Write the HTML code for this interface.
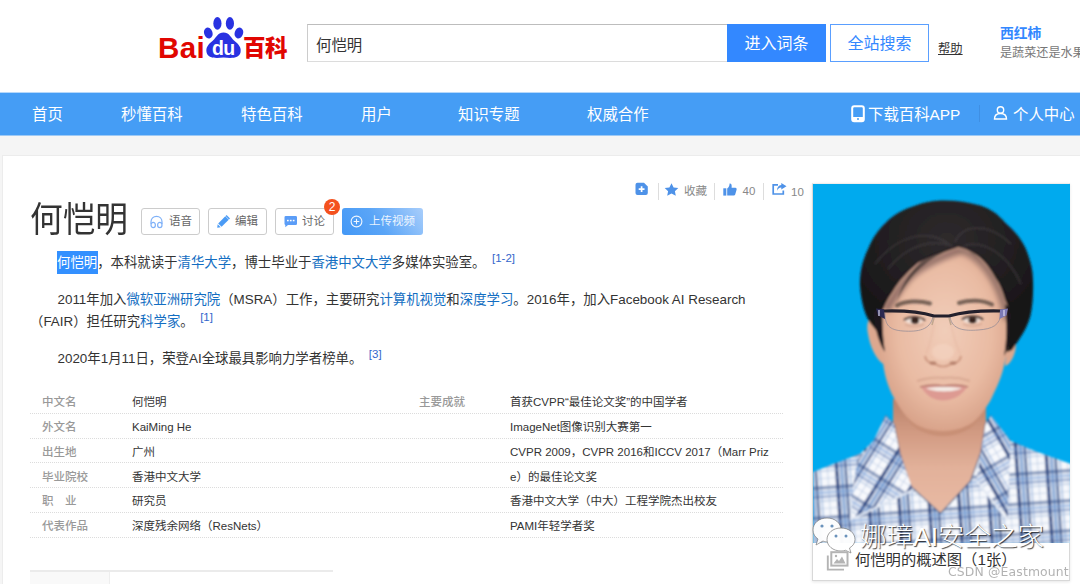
<!DOCTYPE html>
<html lang="zh-CN">
<head>
<meta charset="utf-8">
<title>何恺明_百度百科</title>
<style>
*{box-sizing:border-box;margin:0;padding:0}
html,body{width:1080px;height:584px;overflow:hidden;background:#f5f5f5}
body{position:relative;font-family:"Liberation Sans","Noto Sans CJK SC",sans-serif;font-size:14px;color:#333}
.abs{position:absolute;white-space:nowrap}
a{color:#136ec2;text-decoration:none}
#hdr{position:absolute;left:0;top:0;width:1080px;height:92px;background:#fff}
#nav{position:absolute;left:0;top:92px;width:1080px;height:44px;background:linear-gradient(to bottom,#b5d8fb 0,#b5d8fb 1px,#459df5 1px,#459df5 43px,#9dc9f5 43px)}
#nav span{position:absolute;top:1px;line-height:44px;color:#fff;font-size:15.4px;white-space:nowrap}
#card{position:absolute;left:2px;top:155px;width:1090px;height:440px;background:#fff;border:1px solid #ececec}
.p{position:absolute;white-space:nowrap;font-size:13.4px;line-height:24px;color:#333}
.sup{font-size:11.5px;position:relative;top:-5px;color:#3366cc;margin-left:6.500px}
.btn{position:absolute;top:208px;height:27px;border:1px solid #ccc;border-radius:3px;background:#fff;font-size:11.5px;line-height:25px;color:#666;white-space:nowrap}
.row{position:absolute;left:30px;width:753px;height:0;border-top:1px dotted #dcdcdc}
.k{position:absolute;left:42px;font-size:11.5px;color:#999;font-weight:500;white-space:nowrap;line-height:24px}
.v{position:absolute;font-size:11.5px;color:#333;white-space:nowrap;line-height:24px}
</style>
</head>
<body>
<div id="hdr">
  <!-- logo -->
  <div class="abs" id="bai" style="left:158px;top:31px;font:bold 29.5px/34px 'Liberation Sans',sans-serif;color:#e10601;letter-spacing:0.4px">Bai</div>
  <svg class="abs" id="paw" style="left:203px;top:16px" width="41" height="44" viewBox="0 0 41 44">
    <g fill="#2932e1">
      <ellipse cx="14.400" cy="7.400" rx="4.100" ry="6.300"/>
      <ellipse cx="26.900" cy="7.400" rx="4.100" ry="6.300"/>
      <ellipse cx="5.300" cy="17" rx="4.200" ry="5.600" transform="rotate(-18 5.300 17)"/>
      <ellipse cx="35.900" cy="17" rx="4.200" ry="5.600" transform="rotate(18 35.900 17)"/>
      <path d="M20.600 16.500 C26 16.500 27.500 21 31 24.500 C36 28.500 38.500 31.500 37.500 36.500 C36 42 30 42.500 20.600 41.500 C11 42.500 5 42 3.600 36.500 C2.600 31.500 5 28.500 10 24.500 C13.500 21 15 16.500 20.600 16.500Z"/>
    </g>
    <text x="20.200" y="38.600" text-anchor="middle" font-family="Liberation Sans, sans-serif" font-weight="bold" font-size="19.500" fill="#fff" letter-spacing="-0.8">du</text>
  </svg>
  <div class="abs" id="bk" style="left:243px;top:31px;font:900 22.5px/30px 'Noto Sans CJK SC',sans-serif;color:#e10601;letter-spacing:-0.6px">百科</div>
  <!-- search -->
  <div class="abs" style="left:307px;top:24px;width:421px;height:38px;border:1px solid #ccc;border-top-color:#bdbdbd;border-bottom-color:#dcdcdc;background:#fff"></div>
  <div class="abs" style="left:316px;top:35px;font-size:15.400px;line-height:22px;color:#333">何恺明</div>
  <div class="abs" style="left:727px;top:24px;width:99px;height:38px;background:#3388ff;color:#fff;font-size:16px;line-height:40px;text-align:center">进入词条</div>
  <div class="abs" style="left:830px;top:24px;width:99px;height:38px;border:1px solid #5a9fff;background:#fff;color:#3388ff;font-size:16px;line-height:38px;text-align:center">全站搜索</div>
  <div class="abs" style="left:938px;top:41px;font-size:12.3px;line-height:16px;color:#333;text-decoration:underline">帮助</div>
  <div class="abs" style="left:1000px;top:25px;font-size:13.8px;font-weight:bold;line-height:18px;color:#3388ff">西红柿</div>
  <div class="abs" style="left:1000px;top:45px;font-size:12.1px;line-height:16px;color:#777">是蔬菜还是水果</div>
</div>
<div id="nav">
  <span style="left:32px">首页</span>
  <span style="left:121px">秒懂百科</span>
  <span style="left:241px">特色百科</span>
  <span style="left:361px">用户</span>
  <span style="left:458px">知识专题</span>
  <span style="left:587px">权威合作</span>
  <svg class="abs" style="left:851px;top:13px" width="14" height="18" viewBox="0 0 14 18"><rect x="1.2" y="1.2" width="11.6" height="15" rx="2" fill="none" stroke="#fff" stroke-width="2"/><rect x="1.2" y="12" width="11.6" height="4" fill="#fff"/><circle cx="7" cy="14" r="1" fill="#459df5"/></svg>
  <span style="left:868px">下载百科APP</span>
  <div class="abs" style="left:979px;top:13px;width:1px;height:17px;background:#3f8fe3"></div>
  <svg class="abs" style="left:993px;top:13px" width="15" height="16" viewBox="0 0 15 16"><circle cx="7.5" cy="5" r="3.2" fill="none" stroke="#fff" stroke-width="1.4"/><path d="M1.5 14 C1.5 10 4 8.5 7.5 8.5 C11 8.5 13.5 10 13.5 14Z" fill="none" stroke="#fff" stroke-width="1.4"/></svg>
  <span style="left:1013px">个人中心</span>
</div>
<div id="card"></div>

<!-- title -->
<div class="abs" id="title" style="left:30px;top:194.400px;font-size:32.700px;line-height:48px;color:#333;transform:scaleY(1.09);transform-origin:0 0">何恺明</div>
<div class="btn" style="left:141px;width:59px">
  <svg style="position:absolute;left:7px;top:5.500px" width="15" height="14" viewBox="0 0 15 14"><g fill="none" stroke="#7fb1f8" stroke-width="1.200"><path d="M2 9 V6.800 C2 3.600 4.300 1.300 7.500 1.300 C10.700 1.300 13 3.600 13 6.800 V9"/><ellipse cx="4.200" cy="10" rx="2.200" ry="2.700"/><ellipse cx="10.800" cy="10" rx="2.200" ry="2.700"/></g></svg>
  <span style="position:absolute;left:27px">语音</span></div>
<div class="btn" style="left:208px;width:59px">
  <svg style="position:absolute;left:7.500px;top:5.500px" width="13" height="13" viewBox="0 0 13 13"><g fill="#4a9bf5"><path d="M8.300 1.300 L11.700 4.700 L4.600 11.800 L1.200 8.400Z"/><path d="M9.100 .500 L10.100 -.500 L13.500 2.900 L12.500 3.900Z" transform="translate(-.5 .5)"/><path d="M.700 9.300 L3.700 12.300 L.2 12.800Z"/></g></svg>
  <span style="position:absolute;left:26px">编辑</span></div>
<div class="btn" style="left:275px;width:59px">
  <svg style="position:absolute;left:7.500px;top:7px" width="14" height="12" viewBox="0 0 14 12"><path d="M1.800 0 H11.700 Q13 0 13 1.300 V7.700 Q13 9 11.700 9 H4 L1.300 11.300 V9 Q.500 8.800 .500 7.700 V1.300 Q.500 0 1.800 0Z" fill="#5b9df7"/><g fill="#fff"><rect x="3" y="3.800" width="1.700" height="1.500"/><rect x="5.900" y="3.800" width="1.700" height="1.500"/><rect x="8.800" y="3.800" width="1.700" height="1.500"/></g></svg>
  <span style="position:absolute;left:26px">讨论</span></div>
<div class="btn" style="left:342px;width:81px;background:linear-gradient(55deg,#4398f6 0%,#5aa5f7 45%,#a9cefb 100%);border:0;color:rgba(255,255,255,.88);line-height:27px">
  <svg style="position:absolute;left:7.500px;top:6.500px" width="13" height="13" viewBox="0 0 13 13"><g fill="none" stroke="#fff" stroke-width="1.100" opacity=".92"><circle cx="6.500" cy="6.500" r="5.400"/><path d="M6.500 3.700 V9.300 M3.700 6.500 H9.300"/></g></svg>
  <span style="position:absolute;left:27px">上传视频</span></div>
<div class="abs" style="left:324px;top:199px;width:16px;height:16px;border-radius:8px;background:#f4511e;color:#fff;font-size:12px;line-height:16px;text-align:center">2</div>

<!-- top-right tools -->
<svg class="abs" style="left:635px;top:182px" width="14" height="14" viewBox="0 0 14 14"><path d="M2.500 .800 H9 L12.800 4.600 V11 Q12.800 13 10.800 13 H2.500 Q.500 13 .500 11 V2.800 Q.500 .800 2.500 .800Z" fill="#4e92e8"/><path d="M6.600 4.200 V10 M3.700 7.100 H9.500" stroke="#fff" stroke-width="1.700" fill="none"/></svg>
<div class="abs" style="left:658px;top:183px;width:1px;height:17px;background:#ddd"></div>
<svg class="abs" style="left:664px;top:183px" width="15" height="13" viewBox="0 0 15 13"><path d="M7.500 .300 L9.600 4.500 L14.300 5.100 L10.900 8.300 L11.800 12.800 L7.500 10.600 L3.200 12.800 L4.100 8.300 L.700 5.100 L5.400 4.500Z" fill="#4e92e8"/></svg>
<div class="abs" style="left:684px;top:183px;font-size:11.500px;line-height:16px;color:#888">收藏</div>
<div class="abs" style="left:714px;top:183px;width:1px;height:17px;background:#ddd"></div>
<svg class="abs" style="left:723px;top:182.500px" width="14" height="13" viewBox="0 0 14 13"><g fill="#4e92e8"><rect x=".300" y="5.300" width="3" height="7.300"/><path d="M4.200 12.600 V5.500 C6 4.500 6.500 2.500 6.600 .600 C8.300 .400 9 2 8.600 4.800 H12.300 C13.600 4.800 13.900 6 13.500 7 L12.200 11.600 C12 12.300 11.500 12.600 10.800 12.600Z"/></g></svg>
<div class="abs" style="left:742.500px;top:183px;font-size:11.500px;line-height:16px;color:#888">40</div>
<div class="abs" style="left:763px;top:183px;width:1px;height:17px;background:#ddd"></div>
<svg class="abs" style="left:771.500px;top:183px" width="15" height="12" viewBox="0 0 15 12"><path d="M6 1.800 H1.200 V11 H11.300 V7.500" fill="none" stroke="#4e92e8" stroke-width="1.700"/><path d="M9.300 0 L14.500 3.300 L9.300 6.600 V4.500 C7 4.500 5.800 5.800 5 7.800 C5 4.500 6.500 2.200 9.300 2Z" fill="#4e92e8"/></svg>
<div class="abs" style="left:791px;top:183.500px;font-size:11.500px;line-height:16px;color:#888">10</div>

<!-- paragraphs -->
<div class="abs" style="left:57px;top:251px;width:40.500px;height:22.500px;background:#3390ff"></div>
<div class="p" style="left:57px;top:251px"><span style="color:#fff">何恺明</span>，本科就读于<a>清华大学</a>，博士毕业于<a>香港中文大学</a>多媒体实验室。<span class="sup">[1-2]</span></div>
<div class="p" style="left:57.500px;top:288px">2011年加入<a>微软亚洲研究院</a>（MSRA）工作，主要研究<a>计算机视觉</a>和<a>深度学习</a>。2016年，加入Facebook AI Research</div>
<div class="p" style="left:30px;top:310px">（FAIR）担任研究<a>科学家</a>。<span class="sup">[1]</span></div>
<div class="p" style="left:57.500px;top:347px">2020年1月11日，荣登AI全球最具影响力学者榜单。<span class="sup">[3]</span></div>

<!-- table -->
<div class="row" style="top:413px"></div>
<div class="row" style="top:438px"></div>
<div class="row" style="top:462px"></div>
<div class="row" style="top:487px"></div>
<div class="row" style="top:512px"></div>
<div class="row" style="top:537px"></div>
<div class="k" style="top:390px">中文名</div><div class="v" style="left:132px;top:390px">何恺明</div>
<div class="k" style="top:415px">外文名</div><div class="v" style="left:132px;top:415px">KaiMing He</div>
<div class="k" style="top:440px">出生地</div><div class="v" style="left:132px;top:440px">广州</div>
<div class="k" style="top:465px">毕业院校</div><div class="v" style="left:132px;top:465px">香港中文大学</div>
<div class="k" style="top:489px">职&#12288;业</div><div class="v" style="left:132px;top:489px">研究员</div>
<div class="k" style="top:514px">代表作品</div><div class="v" style="left:132px;top:514px">深度残余网络（ResNets）</div>
<div class="k" style="left:419px;top:390px">主要成就</div>
<div class="v" style="left:510px;top:390px">首获CVPR“最佳论文奖”的中国学者</div>
<div class="v" style="left:510px;top:415px">ImageNet图像识别大赛第一</div>
<div class="v" style="left:510px;top:440px">CVPR 2009，CVPR 2016和ICCV 2017（Marr Priz</div>
<div class="v" style="left:510px;top:465px">e）的最佳论文奖</div>
<div class="v" style="left:510px;top:489px">香港中文大学（中大）工程学院杰出校友</div>
<div class="v" style="left:510px;top:514px">PAMI年轻学者奖</div>

<!-- bottom tab stub -->
<div class="abs" style="left:30px;top:569.500px;width:303px;height:2px;background:#ebebeb"></div>
<div class="abs" style="left:30px;top:572px;width:80px;height:12px;background:#f9f9f9;border-right:1px solid #eee"></div>

<!-- photo -->
<div class="abs" id="frame" style="left:812px;top:183px;width:258px;height:398px;background:#fff;border:1px solid #d8d8d8;border-top-color:#eee;box-shadow:0 1px 3px rgba(0,0,0,.10)"></div>
<svg class="abs" id="photo" style="left:812.500px;top:183.500px" width="257" height="359" viewBox="0 0 257 359">
  <defs>
    <pattern id="plaid" width="30" height="30" patternUnits="userSpaceOnUse" patternTransform="rotate(-4)">
      <rect width="30" height="30" fill="#f6f8fc"/>
      <rect x="2" width="3.500" height="30" fill="#243f7a" opacity=".88"/>
      <rect x="7" width="3.200" height="30" fill="#4f7fc4" opacity=".65"/>
      <rect x="11.500" width="2.600" height="30" fill="#2b4a86" opacity=".8"/>
      <rect x="16" width="2" height="30" fill="#86a8d8" opacity=".5"/>
      <rect x="24" width="1" height="30" fill="#9fb6d8" opacity=".5"/>
      <rect y="2" width="30" height="3.500" fill="#2b4a86" opacity=".5"/>
      <rect y="7" width="30" height="3.200" fill="#6f98d2" opacity=".5"/>
      <rect y="11.500" width="30" height="2.600" fill="#3e62a4" opacity=".45"/>
      <rect y="16" width="30" height="2" fill="#9fb6d8" opacity=".45"/>
      <rect y="24" width="30" height="1" fill="#9fb6d8" opacity=".45"/>
    </pattern>
    <pattern id="plaidL" width="30" height="30" patternUnits="userSpaceOnUse" patternTransform="rotate(32)">
      <rect width="30" height="30" fill="#f8f9fd"/>
      <rect x="2" width="3.500" height="30" fill="#243f7a" opacity=".88"/>
      <rect x="7" width="3.200" height="30" fill="#4f7fc4" opacity=".65"/>
      <rect x="11.500" width="2.600" height="30" fill="#2b4a86" opacity=".8"/>
      <rect x="16" width="2" height="30" fill="#86a8d8" opacity=".5"/>
      <rect x="24" width="1" height="30" fill="#9fb6d8" opacity=".5"/>
      <rect y="2" width="30" height="3.500" fill="#2b4a86" opacity=".5"/>
      <rect y="7" width="30" height="3.200" fill="#6f98d2" opacity=".5"/>
      <rect y="11.500" width="30" height="2.600" fill="#3e62a4" opacity=".45"/>
      <rect y="16" width="30" height="2" fill="#9fb6d8" opacity=".45"/>
      <rect y="24" width="30" height="1" fill="#9fb6d8" opacity=".45"/>
    </pattern>
    <pattern id="plaidR" width="30" height="30" patternUnits="userSpaceOnUse" patternTransform="rotate(-30)">
      <rect width="30" height="30" fill="#f8f9fd"/>
      <rect x="2" width="3.500" height="30" fill="#243f7a" opacity=".88"/>
      <rect x="7" width="3.200" height="30" fill="#4f7fc4" opacity=".65"/>
      <rect x="11.500" width="2.600" height="30" fill="#2b4a86" opacity=".8"/>
      <rect x="16" width="2" height="30" fill="#86a8d8" opacity=".5"/>
      <rect x="24" width="1" height="30" fill="#9fb6d8" opacity=".5"/>
      <rect y="2" width="30" height="3.500" fill="#2b4a86" opacity=".5"/>
      <rect y="7" width="30" height="3.200" fill="#6f98d2" opacity=".5"/>
      <rect y="11.500" width="30" height="2.600" fill="#3e62a4" opacity=".45"/>
      <rect y="16" width="30" height="2" fill="#9fb6d8" opacity=".45"/>
      <rect y="24" width="30" height="1" fill="#9fb6d8" opacity=".45"/>
    </pattern>
    <radialGradient id="skin" cx="50%" cy="45%" r="60%">
      <stop offset="0" stop-color="#f1cdb9"/>
      <stop offset=".6" stop-color="#e9bba3"/>
      <stop offset="1" stop-color="#d49c83"/>
    </radialGradient>
    <linearGradient id="neckg" x1="0" y1="0" x2="0" y2="1">
      <stop offset="0" stop-color="#b9826a"/>
      <stop offset=".3" stop-color="#d29b83"/>
      <stop offset=".6" stop-color="#e2b19a"/>
      <stop offset="1" stop-color="#e8baa4"/>
    </linearGradient>
    <radialGradient id="hairg" cx="50%" cy="25%" r="65%">
      <stop offset="0" stop-color="#2e2a2c"/>
      <stop offset=".55" stop-color="#221f21"/>
      <stop offset="1" stop-color="#161416"/>
    </radialGradient>
    <filter id="blur1"><feGaussianBlur stdDeviation="0.8"/></filter>
    <filter id="blur2"><feGaussianBlur stdDeviation="2"/></filter>
  </defs>
  <rect width="258" height="360" fill="#00aaee"/>
  <g filter="url(#blur1)">
  <!-- neck -->
  <path d="M80 215 L80 262 L97 302 L127.5 330 L158 297 L173 262 L173 215Z" fill="url(#neckg)"/>
  <!-- shirt -->
  <path d="M0 288 L20 280 L47.5 269.5 L62.5 254.5 L72.5 231.5 L81 240 L87 270 L97.5 302 L127.5 329.5 L157.5 297 L168 268 L172.5 240 L178 231.5 L192 254.5 L222 267 L258 280 L258 360 L0 360Z" fill="url(#plaid)"/>
  <path d="M72.5 231.5 L81 240 L87 270 L97.5 302 L127.5 329.5 L157.5 297 L168 268 L172.5 240 L178 231.5" fill="none" stroke="#2a3f68" stroke-width="1.5" opacity=".5"/>
  <!-- collars -->
  <path d="M72.500 231.500 L59 260 L44.500 276 L38 316 L38 335.500 L100 306 L87 270 L81 240Z" fill="url(#plaidL)"/>
  <path d="M38 316 L38 335.500 L100 306" fill="none" stroke="#dfe6f2" stroke-width="2"/>
  <path d="M178 231.500 L197.500 256.500 L196 300 L194.500 336.500 L163.500 296.500 L168 268 L172.500 240Z" fill="url(#plaidR)"/>
  <path d="M194.500 336.500 L163.500 296.500" fill="none" stroke="#e3e9f3" stroke-width="2"/>
  <!-- ears -->
  <path d="M62 134 C55 132 53 140 55 150 C57 162 62 174 70 180 L72 150Z" fill="#dca88f"/>
  <path d="M194 150 L192 182 C198 180 203 170 203 160 C203 152 199 148 194 150Z" fill="#dca88f"/>
  <!-- hair back -->
  <path d="M127.500 16.500 C140 16 155 18 167.500 21.500 C178 25 186 31 192.500 39 C202 47 208 55 212.500 64 C217 75 220 85 220 96.500 C220.500 110 219.500 122 217.500 131.500 C214 145 207 154 199 166 L190 170 L66 150 L58 140 C52 132 48 118 47 101.500 C46.500 88 50 75 55.500 64 C60 53 66 45 72.500 39 C81 30 91 25 102.500 21.500 C110 18.500 119 17 127.500 16.500Z" fill="url(#hairg)"/>
  <g fill="none" stroke="#4a4548" stroke-width="2" opacity=".45"><path d="M140 62 C120 55 95 60 75 85"/><path d="M142 58 C150 40 175 38 198 60"/><path d="M136 60 C115 45 85 50 62 80"/><path d="M150 62 C170 55 195 70 208 100"/></g>
  <!-- face -->
  <path d="M145 63 C130 68 115 73 105 79 C94 88 86 97 80 107 C74 115 70 124 67 134 C66 150 67 165 70 179 C72 195 77 208 82.500 216.500 C90 229 96 236 102.500 241.500 C112 247 122 249 130 249 C142 248 152 244 160 239 C168 231 173 224 177.500 216.500 C184 203 189 192 191 181.500 C195 165 197 150 197 136.500 C196 128 195 122 192.500 116.500 C190 108 187 100 182.500 94 C178 86 174 80 167.500 74 C160 68 152 64 145 63Z" fill="url(#skin)"/>
  <!-- fringe shadow -->
  <g fill="none" stroke="#2a2024" filter="url(#blur2)">
    <path d="M147 66 C127 73 108 82 96 93 C88 102 80 114 73 126" stroke-width="8" opacity=".42"/>
    <path d="M147 66 C160 70 171 80 180 95 C187 107 192 121 194 136" stroke-width="7" opacity=".38"/>
  </g>
  <!-- sideburns -->
  <path d="M60 128 L70 122 C69 140 70 155 72 168 C66 160 62 145 60 128Z" fill="#1b191b"/>
  <path d="M197 125 L192 120 C194 140 194 155 191 172 C196 164 199 150 197 125Z" fill="#1b191b"/>
  <!-- fringe strands -->
  <path d="M145 63 C120 70 95 90 84 118 C88 100 100 82 118 70Z" fill="#1b191b" opacity=".55"/>
  <path d="M145 63 C165 70 182 90 192 118 C186 100 176 84 160 70Z" fill="#1b191b" opacity=".5"/>
  </g>
  <!-- facial features -->
  <g filter="url(#blur1)">
    <path d="M84 121.500 C92 117 106 116 117 119.500" stroke="#4c3d39" stroke-width="4" fill="none" opacity=".72" stroke-linecap="round"/>
    <path d="M146 119 C157 115.500 170 116 179 120.500" stroke="#4c3d39" stroke-width="4" fill="none" opacity=".72" stroke-linecap="round"/>
    <ellipse cx="101" cy="137" rx="8.500" ry="2.800" fill="#f1e2da"/>
    <ellipse cx="159" cy="136.500" rx="8.500" ry="2.800" fill="#f1e2da"/>
    <ellipse cx="102" cy="136.800" rx="4.200" ry="3" fill="#35221d"/>
    <ellipse cx="159.500" cy="136.300" rx="4.200" ry="3" fill="#35221d"/>
    <path d="M91 136 C97 132 106 132 112 136.500" stroke="#3f2c28" stroke-width="1.800" fill="none"/>
    <path d="M149 135.500 C155 131.500 164 131.500 170 135.500" stroke="#3f2c28" stroke-width="1.800" fill="none"/>
    <path d="M92 140.500 C98 143 106 143 111 140" stroke="#c99a86" stroke-width="1.200" fill="none" opacity=".8"/>
    <path d="M150 140 C156 142.500 164 142.500 169 139.500" stroke="#c99a86" stroke-width="1.200" fill="none" opacity=".8"/>
    <!-- nose -->
    <ellipse cx="130" cy="168" rx="11" ry="8" fill="#f7dccb" opacity=".4"/>
    <path d="M112 172 C113 180 121 179 124 181 C128 183 132 183 136 181 C139 179 147 180 148 172" stroke="#c78f78" stroke-width="2.200" fill="none" opacity=".75"/>
    <ellipse cx="120" cy="179" rx="3.500" ry="1.800" fill="#a8705c" opacity=".7"/>
    <ellipse cx="140" cy="179" rx="3.500" ry="1.800" fill="#a8705c" opacity=".7"/>
    <path d="M121 140 C119 152 117 160 113 170" stroke="#d9a68f" stroke-width="2" fill="none" opacity=".22"/>
    <path d="M138 140 C140 152 143 160 147 170" stroke="#d9a68f" stroke-width="2" fill="none" opacity=".22"/>
    <!-- mouth -->
    <path d="M108 203 C118 200.500 125 201 130 202 C137 201 146 200.500 154 203 C148 213 138 216.500 130 216.500 C122 216.500 114 213 108 203Z" fill="#dd9a92"/>
    <path d="M113 204 C124 202.500 138 202.500 149 204 C142 208.500 120 208.500 113 204Z" fill="#f4ece6"/>
    <path d="M107 203 C118 200 125 201 130 202 C137 201 146 200 155 203" stroke="#a86c62" stroke-width="1.200" fill="none"/>
    <path d="M104 197 C112 194 124 193 130 194 C138 193 148 194 157 197" stroke="#b88470" stroke-width="2" fill="none" opacity=".35"/>
    <!-- chin shadow -->
    <path d="M92 232 C110 252 150 252 168 232 C160 246 145 252 130 252 C115 252 100 246 92 232Z" fill="#c48a70" opacity=".7"/>
  </g>
  <!-- glasses -->
  <g fill="none">
    <path d="M72 129 C72 141 76 146 90 147 C105 148 117 146 120 133" stroke="#8d8894" stroke-width="1" opacity=".7"/>
    <path d="M137 133 C139 146 152 147 165 146 C180 145 187 141 188 129" stroke="#8d8894" stroke-width="1" opacity=".7"/>
    <path d="M64 126.500 L72 127 C92 126.500 108 128 121 132 L136 132 C150 128 168 126.500 188 127 L194 126.500" stroke="#23202c" stroke-width="3.200"/>
    <path d="M63 124.500 L71 125.500 L72 135 L65 131.500Z" fill="#2a2850" stroke="none"/>
    <path d="M195 124.500 L187 125.500 L186.500 135 L193.500 131.500Z" fill="#7d7ab5" stroke="none"/>
    <path d="M66 126 V132 M191 126 V132" stroke="#dcd8f0" stroke-width="1.200"/>
    <path d="M121 134 L119 141 M136 134 L138 141" stroke="#b59d84" stroke-width="1.500" opacity=".8"/>
  </g>
</svg>
<!-- watermark -->
<svg class="abs" style="left:812px;top:516px" width="46" height="38" viewBox="0 0 46 38">
  <g fill="#fff" stroke="#777" stroke-width=".7" opacity=".96">
    <path d="M15 2 C7 2 1 7 1 14 C1 18 3 21 6 23 L4 29 L11 25 C12 25.500 13.500 26 15 26 C23 26 29 20.500 29 14 C29 7 23 2 15 2Z"/>
    <path d="M29 12 C21 12 15 17 15 23.500 C15 30 21 35 29 35 C30.500 35 32 34.800 33.500 34.300 L39 37 L37.500 32 C41 30 43 27 43 23.500 C43 17 37 12 29 12Z"/>
  </g>
  <circle cx="10" cy="10" r="1.600" fill="#6a92bb"/><circle cx="20" cy="10" r="1.600" fill="#6a92bb"/>
  <circle cx="24" cy="20" r="1.500" fill="#6a92bb"/><circle cx="34" cy="20" r="1.500" fill="#6a92bb"/>
</svg>
<div class="abs" id="wm" style="left:860px;top:519px;font-family:'Liberation Sans','Noto Sans CJK SC',sans-serif;font-weight:300;font-size:26.5px;line-height:36px;color:#fff;text-shadow:1px 1px 1px rgba(0,0,0,.75)">娜璋AI安全之家</div>
<svg class="abs" style="left:826px;top:551px" width="23" height="21" viewBox="0 0 23 21">
  <path d="M1.800 4.500 V18.600 H18" fill="none" stroke="#b4b4b4" stroke-width="1.900"/>
  <rect x="5.300" y="1.200" width="16.200" height="13.400" fill="none" stroke="#b4b4b4" stroke-width="2"/>
  <path d="M7.500 12.500 L11 8 L13 10 L16 5.500 L19.500 12.500Z" fill="#b4b4b4"/><circle cx="10" cy="5" r="1.200" fill="#b4b4b4"/>
</svg>
<div class="abs" id="cap" style="left:855px;top:549px;font-size:15.300px;line-height:22px;color:#333">何恺明的概述图（1张）</div>
<div class="abs" id="csdn" style="left:948px;top:563px;font-family:'DejaVu Sans','Liberation Sans',sans-serif;font-size:12.400px;letter-spacing:0.150px;line-height:18px;color:#999;opacity:.75">CSDN @Eastmount</div>
</body>
</html>
